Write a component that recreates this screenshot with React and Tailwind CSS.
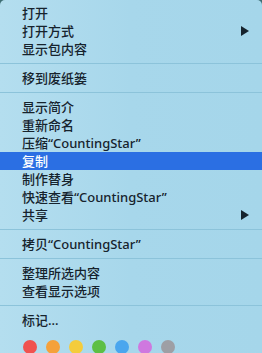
const groups = [
  [{ t: '打开' }, { t: '打开方式', sub: true }, { t: '显示包内容' }],
  [{ t: '移到废纸篓' }],
  [
    { t: '显示简介' },
    { t: '重新命名' },
    { t: '压缩“CountingStar”' },
    { t: '复制', active: true },
    { t: '制作替身' },
    { t: '快速查看“CountingStar”' },
    { t: '共享', sub: true },
  ],
  [{ t: '拷贝“CountingStar”' }],
  [{ t: '整理所选内容' }, { t: '查看显示选项' }],
  [{ t: '标记…' }],
];

const tags = ['#f0524f', '#f5a13b', '#f4cc3c', '#5dbf45', '#4aa6ee', '#cf78df', '#9e9fa5'];

export default function App() {
  return (
    <div className="w-[262px] h-[353px] overflow-hidden bg-[#3e6e74]">
      <div
        className="h-[360px] rounded-[5px] bg-gradient-to-r from-[#b4deef] via-[#a7d7eb] to-[#a5d6ea] pt-1 text-[13px] font-medium text-[#16232d]"
        style={{ fontFamily: '"Noto Sans", "Noto Sans CJK SC", sans-serif' }}
      >
        {groups.map((g, gi) => (
          <div key={gi}>
            {gi > 0 && (
              <div className="h-[11px] flex items-center">
                <div className="h-px w-full bg-[#8cc3da]" />
              </div>
            )}
            {g.map((it) => (
              <MenuItem key={it.t} {...it} />
            ))}
          </div>
        ))}
        <div className="flex gap-[9px] pl-[23px] pt-[11px]">
          {tags.map((c) => (
            <span key={c} className="w-[14px] h-[14px] rounded-full" style={{ background: c }} />
          ))}
        </div>
      </div>
    </div>
  );
}

function MenuItem({ t, sub, active }) {
  return (
    <div
      className={
        'h-[18px] flex items-center justify-between pl-[22px] pr-[13px] leading-none ' +
        (active ? 'bg-[#2b6fe3] text-white' : '')
      }
    >
      <span>{t}</span>
      {sub && (
        <svg width="8" height="10" viewBox="0 0 8 10">
          <path d="M0 0 L8 5 L0 10 Z" fill="#16232d" />
        </svg>
      )}
    </div>
  );
}
